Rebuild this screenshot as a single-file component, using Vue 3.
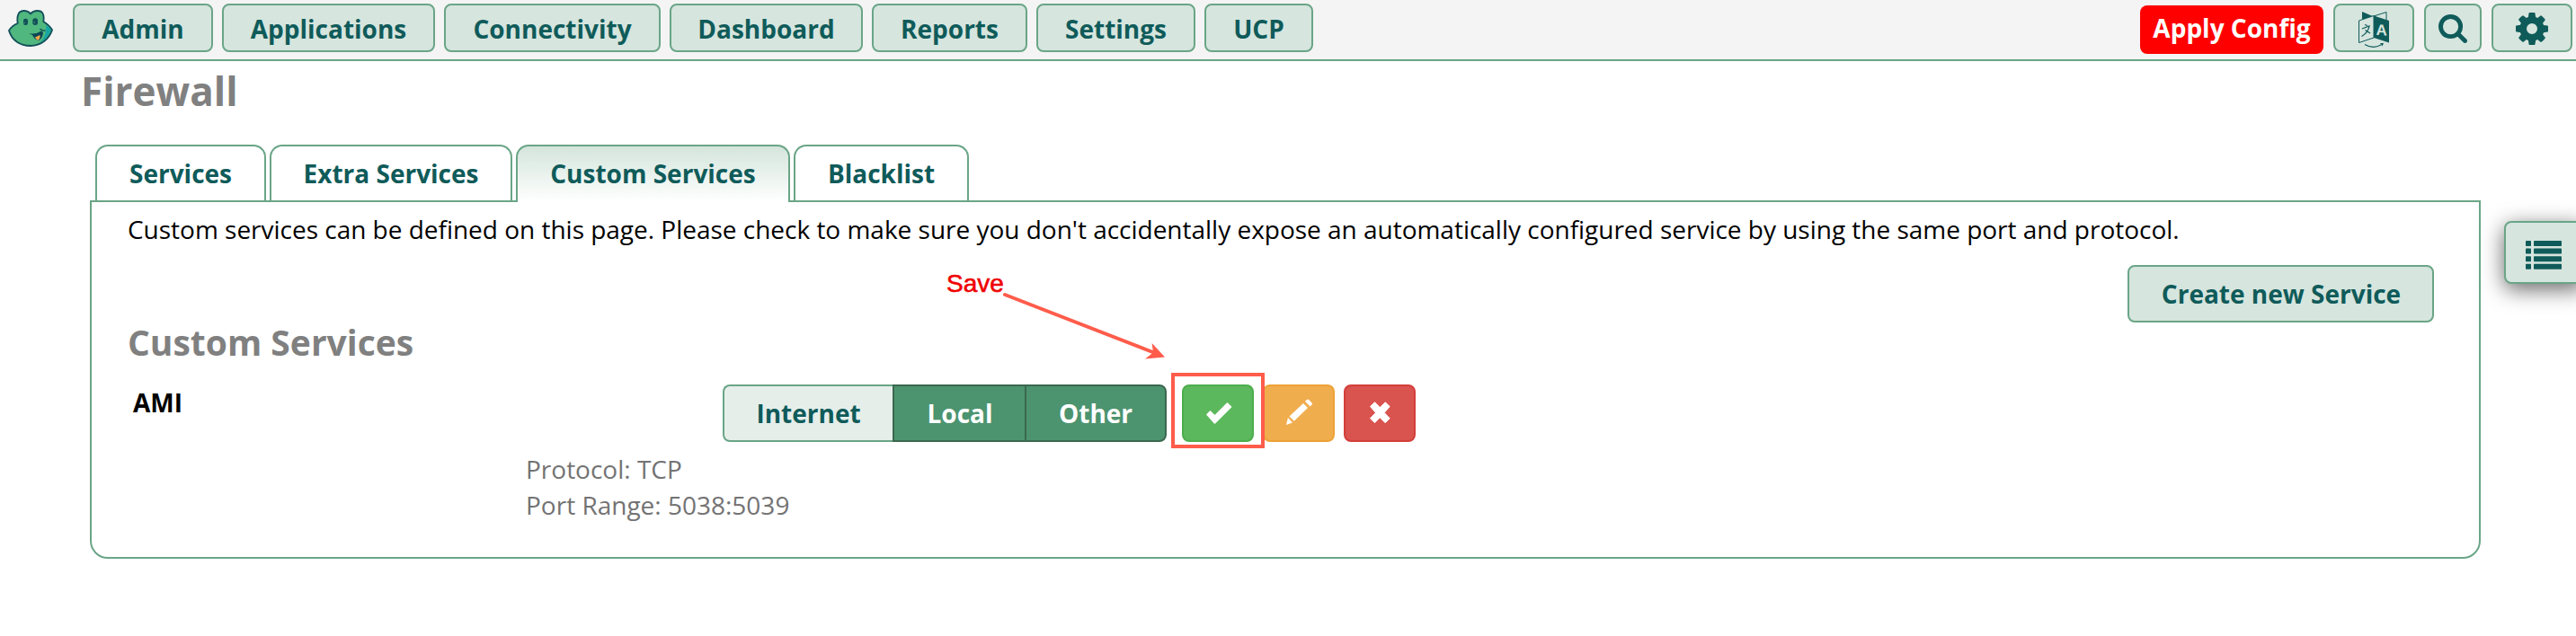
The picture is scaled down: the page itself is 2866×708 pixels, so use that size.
<script setup>
const nav = [
  { label: 'Admin', width: 156 },
  { label: 'Applications', width: 237 },
  { label: 'Connectivity', width: 241 },
  { label: 'Dashboard', width: 215 },
  { label: 'Reports', width: 173 },
  { label: 'Settings', width: 177 },
  { label: 'UCP', width: 121 },
]
const tabs = [
  { label: 'Services', width: 190 },
  { label: 'Extra Services', width: 270 },
  { label: 'Custom Services', width: 305, active: true },
  { label: 'Blacklist', width: 195 },
]
const zones = [
  { label: 'Internet', width: 189 },
  { label: 'Local', width: 148, on: true },
  { label: 'Other', width: 158, on: true },
]
</script>

<template>
  <div class="page">
    <header class="topbar">
      <svg class="logo" viewBox="0 0 150 123">
        <path d="M32 45C28 14 37 3 53 3C64 3 69 6 75 13C81 6 88 3 98 3C114 3 122 14 118 39Q136 49 147 67C136 98 110 120 75 120C39 120 12 101 3 69Q12 53 32 45Z" fill="#50b77e" stroke="#124f59" stroke-width="5.500" stroke-linejoin="round" />
        <path d="M127 50Q137 56 143 66C136 88 123 101 106 109Q129 90 127 50Z" fill="#15a6a3" />
        <path d="M69 78Q92 84 112 70L117 76Q116 94 101 103Q88 98 81 84Z" fill="#0d4655" />
        <path d="M90 91Q97 90 106 84Q109 94 100 102Q94 99 90 91Z" fill="#f7a94b" />
        <path d="M107 64Q115 70 123 69" fill="none" stroke="#124f59" stroke-width="4" stroke-linecap="round" />
        <rect x="51" y="29" width="15" height="22" rx="7" fill="#124f59" />
        <rect x="82" y="28" width="17" height="23" rx="8" fill="#124f59" />
        <circle cx="55" cy="43" r="2" fill="#50b77e" />
        <circle cx="88" cy="42" r="2" fill="#50b77e" />
      </svg>
      <nav class="menu">
        <button v-for="n in nav" :key="n.label" class="btn" :style="{ width: n.width + 'px' }">{{ n.label }}</button>
      </nav>
      <div class="tools">
        <button class="apply">Apply Config</button>
        <button class="btn wide">
          <svg class="lang" viewBox="0 0 34 40" width="34" height="40">
            <path d="M4 0L17 5.500L11 8L4 9.500Z" fill="#0f5b5a" />
            <path d="M17 5L31 .5V10" fill="none" stroke="#0f5b5a" stroke-width="1" />
            <path d="M.5 10L17 4.500V29L.5 34.500Z" fill="#d6e5de" stroke="#0f5b5a" stroke-width="1" />
            <path d="M17 4.500L34 10V34.500L17 29Z" fill="#0f5b5a" />
            <path d="M7 14.500L10 15.500M4 19L12 16Q11 23 3.500 27.500M7.500 20.500L13 24" fill="none" stroke="#0f5b5a" stroke-width="1.300" />
            <text x="19.500" y="26" class="lang-letter" transform="skewY(4) translate(0 -1.500)">A</text>
            <path d="M7 36.500Q16 42 25 37" fill="none" stroke="#0f5b5a" stroke-width="1.100" />
            <path d="M24 35L28 35L26.500 38.500Z" fill="#0f5b5a" />
          </svg>
        </button>
        <button class="btn search">
          <svg viewBox="0 128 1664 1664" width="32" height="32"><path fill="#0f5b5a" d="M1152 832q0-185-131.500-316.500t-316.500-131.500-316.500 131.500-131.500 316.500 131.500 316.500 316.500 131.500 316.500-131.500 131.500-316.500zm512 832q0 52-38 90t-90 38q-54 0-90-38l-343-342q-179 124-399 124-143 0-273.500-55.500t-225-150-150-225-55.500-273.500 55.500-273.500 150-225 225-150 273.500-55.500 273.500 55.500 225 150 150 225 55.500 273.500q0 220-124 399l343 343q37 37 37 90z" /></svg>
        </button>
        <button class="btn wide">
          <svg viewBox="0 128 1536 1536" width="36" height="36"><path fill="#0f5b5a" d="M1024 896q0-106-75-181t-181-75-181 75-75 181 75 181 181 75 181-75 75-181zm512-109v222q0 12-8 23t-20 13l-185 28q-19 54-39 91 35 50 107 138 10 12 10 25t-9 23q-27 37-99 108t-94 71q-12 0-26-9l-138-108q-44 23-91 38-16 136-29 186-7 28-36 28h-222q-14 0-24.500-8.500t-11.500-21.500l-28-184q-49-16-90-37l-141 107q-10 9-25 9-14 0-25-11-126-114-165-168-7-10-7-23 0-12 8-23 15-21 51-66.500t54-70.500q-27-50-41-99l-183-27q-13-2-21-12.500t-8-23.500v-222q0-12 8-23t19-13l186-28q14-46 39-92-40-57-107-138-10-12-10-24 0-10 9-23 26-36 98.500-107.500t94.500-71.500q13 0 26 10l138 107q44-23 91-38 16-136 29-186 7-28 36-28h222q14 0 24.500 8.500t11.500 21.500l28 184q49 16 90 37l142-107q9-9 24-9 13 0 25 10 129 119 165 170 7 8 7 22 0 12-8 23-15 21-51 66.500t-54 70.500q26 50 41 98l183 28q13 2 21 12.500t8 23.500z" /></svg>
        </button>
      </div>
    </header>

    <h1>Firewall</h1>

    <div class="tabs">
      <div v-for="t in tabs" :key="t.label" class="tab" :class="{ active: t.active }" :style="{ width: t.width + 'px' }">{{ t.label }}</div>
    </div>

    <main class="panel">
      <p class="intro">Custom services can be defined on this page. Please check to make sure you don't accidentally expose an automatically configured service by using the same port and protocol.</p>
      <div class="create-row"><button class="btn create">Create new Service</button></div>
      <h2>Custom Services</h2>
      <div class="service">
        <div class="name">AMI</div>
        <div class="zones">
          <button v-for="z in zones" :key="z.label" class="zone" :class="{ on: z.on }" :style="{ width: z.width + 'px' }">{{ z.label }}</button>
        </div>
        <div class="actions">
          <button class="act ok">
            <svg viewBox="0 0 80 64" width="80" height="64"><path d="M28 33.500L31.500 30L36.500 35L50.500 21L54.500 25L36.500 43Z" fill="#fff" stroke="#fff" stroke-width="1.600" stroke-linejoin="round" /></svg>
          </button>
          <button class="act edit">
            <svg viewBox="0 0 80 64" width="80" height="64"><path d="M26 45L28 37L33 42.500ZM29.500 35.500L45 21L50 26L34.800 40.800ZM47 18.800L48.800 17Q50 16 51.200 17L54.600 20.500Q55.600 21.500 54.600 22.600L52.500 24.500Z" fill="#fff" /></svg>
          </button>
          <button class="act del">
            <svg viewBox="0 0 80 64" width="80" height="64"><path d="M29.500 24.500L34.500 19.800L40.300 25.600L46.200 19.800L51.200 24.500L45.200 31.500L51.200 37.700L46.200 42.700L40.300 36.800L34.500 42.700L29.500 37.700L35.500 31.500Z" fill="#fff" stroke="#fff" stroke-width="1" stroke-linejoin="round" /></svg>
          </button>
        </div>
      </div>
      <div class="details">
        <div>Protocol: TCP</div>
        <div>Port Range: 5038:5039</div>
      </div>
    </main>

    <div class="drawer">
      <svg viewBox="0 0 40 32" width="40" height="32" fill="#0f5b5a">
        <g v-for="i in 4" :key="i" :transform="`translate(0 ${(i - 1) * 8.600})`">
          <rect width="6" height="6" rx=".8" />
          <rect x="9" width="31" height="6" rx=".8" />
        </g>
      </svg>
    </div>

    <div class="callout-label">Save</div>
    <svg class="callout-arrow" viewBox="0 0 184 76" width="184" height="76">
      <path d="M3 5L170 70" stroke="#ff5c4b" stroke-width="4" stroke-linecap="round" />
      <path d="M166.600 59L181 74.500L159 76.500L168 69.500Z" fill="#ff5c4b" />
    </svg>
    <div class="callout-box"></div>
  </div>
</template>

<style>
body { margin: 0; background: #fff; }
</style>

<style scoped>
.page {
  position: relative;
  width: 2866px;
  height: 708px;
  overflow: hidden;
  font-family: "Open Sans", "Noto Sans", sans-serif;
  font-size: 28px;
  color: #000;
  background: #fff;
}
.page * { box-sizing: border-box; }
button { font: inherit; margin: 0; padding: 0; white-space: nowrap; }
.topbar {
  display: flex;
  align-items: flex-start;
  height: 68px;
  padding: 4px 4px 0 9px;
  background: #f4f4f4;
  border-bottom: 2px solid #6aa587;
}
.logo { width: 50px; height: 41px; margin: 7px 22px 0 0; }
.menu { display: flex; gap: 10px; }
.btn {
  display: flex;
  align-items: center;
  justify-content: center;
  height: 54px;
  border: 2px solid #6aa587;
  border-radius: 8px;
  background: #d6e5de;
  color: #0f5b5a;
  font-weight: 700;
}
.menu .btn { padding-top: 2px; }
.tools { display: flex; gap: 11px; margin-left: auto; }
.apply {
  width: 204px;
  height: 54px;
  margin-top: 2px;
  padding-bottom: 4px;
  border: 0;
  border-radius: 8px;
  background: #f00;
  color: #fff;
  font-weight: 700;
}
.wide { width: 90px; }
.search { width: 64px; }
.btn svg { display: block; margin-top: 2px; }
.btn .lang { margin-top: 4px; }
.lang-letter { font: 700 17px "Liberation Sans", sans-serif; fill: #d6e5de; }
h1 {
  margin: 3px 0 30px 90px;
  font-size: 44px;
  line-height: 60px;
  font-weight: 700;
  color: #808080;
}
.tabs {
  position: relative;
  z-index: 1;
  display: flex;
  gap: 4px;
  height: 62px;
  margin-left: 106px;
}
.tab {
  height: 62px;
  border: 2px solid #6aa587;
  border-bottom: 0;
  border-radius: 14px 14px 0 0;
  line-height: 60px;
  text-align: center;
  font-weight: 700;
  color: #0f5b5a;
  background: #fff;
}
.tab.active { height: 64px; background: linear-gradient(#d4e5dc, #fff); }
.panel {
  width: 2660px;
  height: 399px;
  margin-left: 100px;
  padding: 10px 50px 0 40px;
  border: 2px solid #6aa587;
  border-radius: 0 0 20px 20px;
}
.intro { margin: 0; line-height: 40px; letter-spacing: -.015px; white-space: nowrap; }
.create-row { display: flex; justify-content: flex-end; margin-top: 20px; }
.create { width: 341px; height: 64px; padding-left: 1px; }
h2 { margin: -2px 0 0; font-size: 39px; line-height: 48px; color: #808080; }
.service { display: flex; height: 64px; margin-top: 23px; }
.name { width: 662px; padding-left: 6px; line-height: 40px; font-weight: 700; }
.zones { display: flex; }
.zone {
  height: 64px;
  border: 2px solid #6aa587;
  border-right: 0;
  border-radius: 8px 0 0 8px;
  background: #e6eeea;
  color: #0f5b5a;
  font-weight: 700;
}
.zone.on { border-color: #3b684f; border-radius: 0; background: #4c946f; color: #fff; }
.zone.on:last-child { margin-left: -1px; border-right: 2px solid #3b684f; border-radius: 0 8px 8px 0; }
.actions { display: flex; gap: 10px; margin-left: 17px; }
.act {
  display: flex;
  align-items: center;
  justify-content: center;
  width: 80px;
  height: 64px;
  border: 2px solid;
  border-radius: 8px;
}
.act svg { flex: none; }
.ok { background: #5cb85c; border-color: #4cae4c; }
.edit { background: #f0ad4e; border-color: #eea236; }
.del { background: #d9534f; border-color: #d43f3a; }
.details { margin: 10px 0 0 443px; line-height: 40px; color: #737373; }
.drawer {
  position: absolute;
  left: 2786px;
  top: 246px;
  width: 90px;
  height: 70px;
  padding: 20px 0 0 22px;
  border: 2px solid #6aa587;
  border-radius: 8px;
  background: #d6e5de;
  box-shadow: 0 6px 24px rgba(0, 0, 0, .6);
}
.drawer svg { display: block; }
.callout-label {
  position: absolute;
  left: 1053px;
  top: 300px;
  font: 28px/32px "Liberation Sans", Arial, sans-serif;
  color: #f00000;
  -webkit-text-stroke: .6px #f00000;
}
.callout-arrow { position: absolute; left: 1115px; top: 323px; overflow: visible; }
.callout-box { position: absolute; left: 1303px; top: 415px; width: 104px; height: 84px; border: 4px solid #ff5c4b; }
</style>
